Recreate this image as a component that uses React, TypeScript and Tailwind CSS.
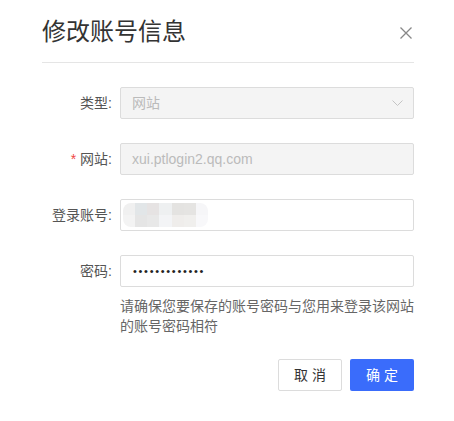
import React from "react";

const FONT = { fontFamily: '"Liberation Sans", "Noto Sans CJK SC", sans-serif' };

// 打码的账号（像素块）
const BLUR_TOP = ["#f0f0f0", "#e2e6e8", "#e6e3e3", "#eef0f1", "#e4e3e1", "#e5e4e2", "#f6f6f8"];
const BLUR_BOTTOM = ["#f3f3f3", "#e5e5e5", "#e8e8e8", "#f3f4f6", "#efedeb", "#f0efed", "#f8f8fa"];

function Row({ label, required, children }: { label: string; required?: boolean; children: React.ReactNode }) {
  return (
    <div className="flex items-center">
      <div className="w-[78px] text-right text-[14px] text-[#555] pr-[8px] whitespace-nowrap">
        {required && <span className="text-[#f04645] mr-[4px]">*</span>}
        {label}:
      </div>
      <div className="flex-1">{children}</div>
    </div>
  );
}

function BlurredValue() {
  return (
    <div className="flex flex-col overflow-hidden rounded-[8px] w-[85px]">
      {[BLUR_TOP, BLUR_BOTTOM].map((row, i) => (
        <div key={i} className="flex h-[12px]">
          {row.map((c, j) => (
            <div key={j} className="flex-1" style={{ backgroundColor: c }} />
          ))}
        </div>
      ))}
    </div>
  );
}

export default function App() {
  return (
    <div className="w-[454px] h-[421px] bg-white pl-[42px] pr-[40px] pt-[14px]" style={FONT}>
      <div className="flex items-center justify-between">
        <h1 className="text-[24px] leading-[36px] text-[#333]">修改账号信息</h1>
        <svg width="12" height="12" viewBox="0 0 12 12" className="mr-[2px] mt-[2px]">
          <path d="M0.5 0.5 L11.5 11.5 M11.5 0.5 L0.5 11.5" stroke="#888" strokeWidth="1.3" fill="none" />
        </svg>
      </div>
      <div className="mt-[12px] h-px bg-[#e5e5e5]" />

      <div className="mt-[24px] flex flex-col gap-[24px]">
        <Row label="类型">
          <div className="h-[32px] border border-[#dcdcdc] rounded-[2px] bg-[#f4f4f4] px-[11px] flex items-center justify-between">
            <span className="text-[14px] text-[#bbb]">网站</span>
            <svg width="11" height="6" viewBox="0 0 11 6" className="mr-[-1px]">
              <path d="M0.5 0.5 L5.5 5.5 L10.5 0.5" stroke="#c4c4c4" strokeWidth="1" fill="none" />
            </svg>
          </div>
        </Row>
        <Row label="网站" required>
          <div className="h-[32px] border border-[#dcdcdc] rounded-[2px] bg-[#f4f4f4] px-[11px] flex items-center">
            <span className="text-[14px] text-[#bbb]">xui.ptlogin2.qq.com</span>
          </div>
        </Row>
        <Row label="登录账号">
          <div className="h-[32px] border border-[#dcdcdc] rounded-[2px] bg-white pl-[2px] flex items-center">
            <BlurredValue />
          </div>
        </Row>
        <Row label="密码">
          <div className="h-[32px] border border-[#dcdcdc] rounded-[2px] bg-white px-[12px] flex items-center">
            <span className="text-[11px] tracking-[1.7px] text-[#222]">•••••••••••••</span>
          </div>
        </Row>
      </div>

      <p className="ml-[78px] mt-[9px] text-[14px] leading-[20px] text-[#666]">
        请确保您要保存的账号密码与您用来登录该网站的账号密码相符
      </p>

      <div className="mt-[23px] flex justify-end gap-[8px]">
        <button className="w-[64px] h-[32px] border border-[#dcdcdc] rounded-[2px] bg-white text-[14px] text-[#333]">
          取 消
        </button>
        <button className="w-[64px] h-[32px] rounded-[2px] bg-[#3a6cfb] text-[14px] text-white">
          确 定
        </button>
      </div>
    </div>
  );
}
